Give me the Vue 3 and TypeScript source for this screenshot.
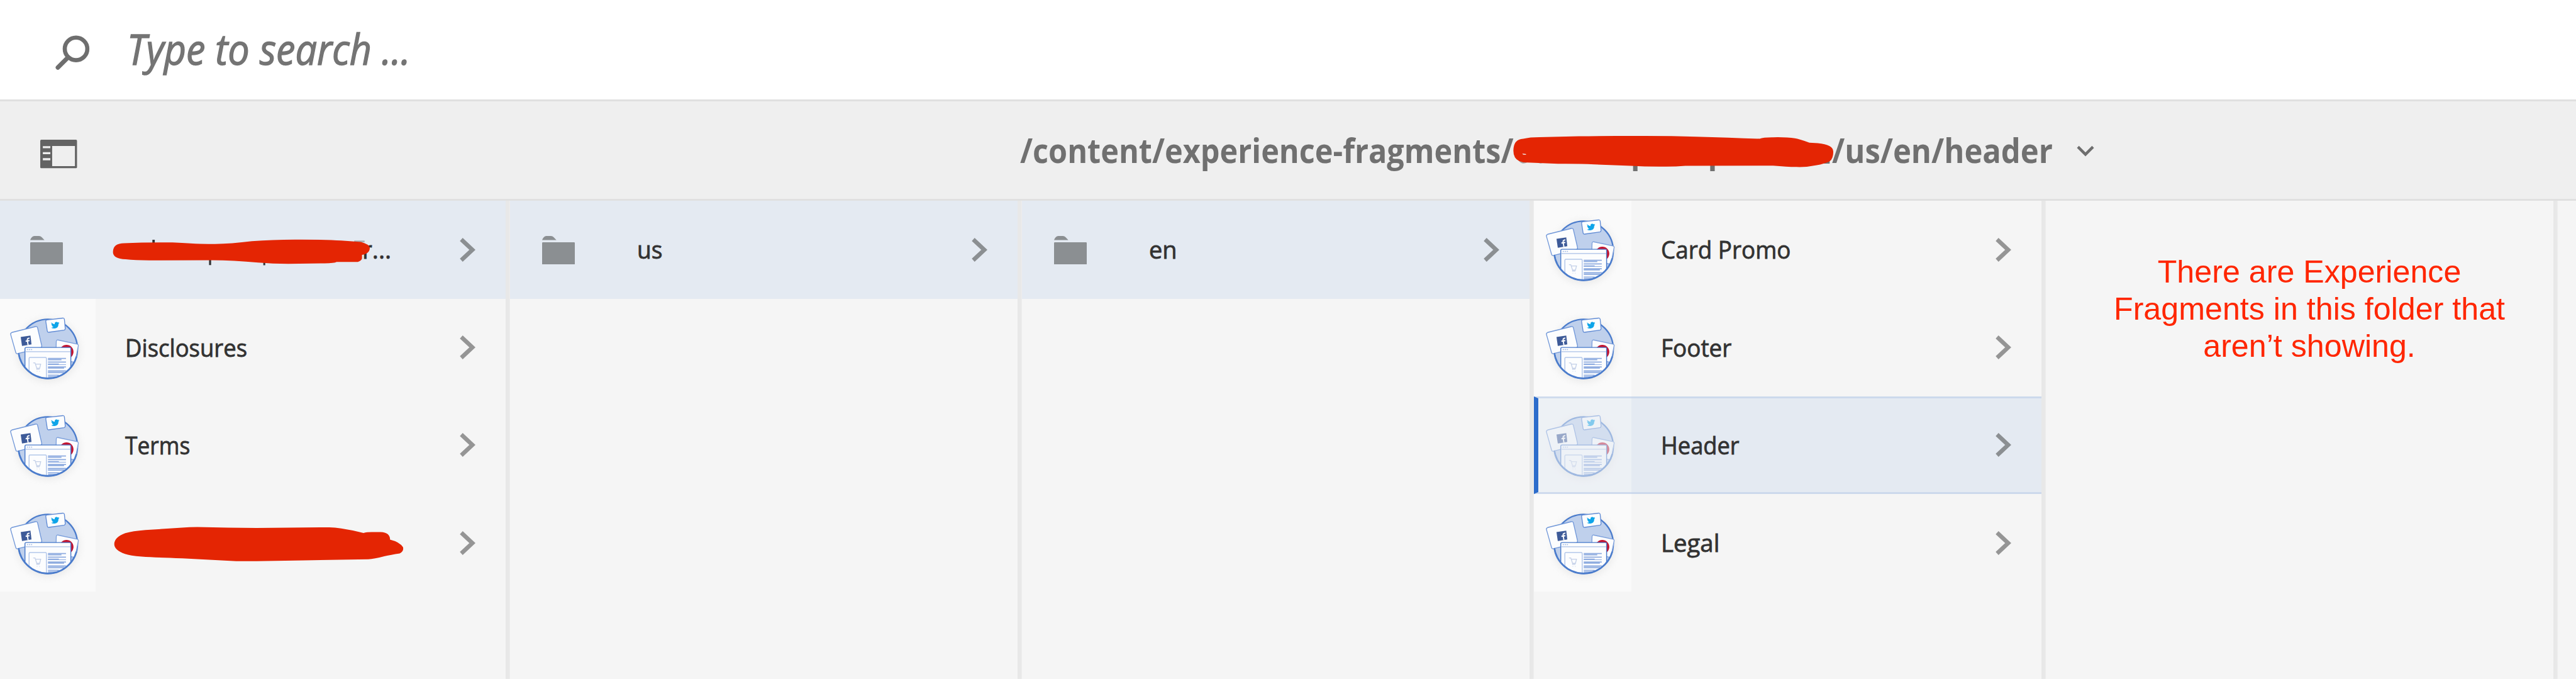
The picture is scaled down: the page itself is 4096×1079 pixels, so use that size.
<script setup lang="ts">
import type { Directive } from 'vue'

interface Item {
  label: string
  kind: 'folder' | 'fragment'
  width: number
  inset?: number
  active?: boolean
  selected?: boolean
}

const columns: Item[][] = [
  [
    { label: 'r...', kind: 'folder', width: 56, inset: 456, active: true },
    { label: 'Disclosures', kind: 'fragment', width: 235 },
    { label: 'Terms', kind: 'fragment', width: 125 },
    { label: '', kind: 'fragment', width: 0 },
  ],
  [{ label: 'us', kind: 'folder', width: 49, active: true }],
  [{ label: 'en', kind: 'folder', width: 54, active: true }],
  [
    { label: 'Card Promo', kind: 'fragment', width: 250 },
    { label: 'Footer', kind: 'fragment', width: 136 },
    { label: 'Header', kind: 'fragment', width: 151, selected: true },
    { label: 'Legal', kind: 'fragment', width: 113 },
  ],
]

// Condenses a text run horizontally to the given width, in hundredths of a rem.
const vFit: Directive<HTMLElement, number> = {
  mounted(el, { value }) {
    const unit = parseFloat(getComputedStyle(document.documentElement).fontSize) / 100
    const natural = el.getBoundingClientRect().width
    if (value && natural) el.style.transform = `scaleX(${(value * unit) / natural})`
  },
}
</script>

<template>
  <div class="page">
    <header class="search">
      <svg class="search-icon" viewBox="0 0 72 72" fill="none" stroke="#6e6e6e">
        <circle cx="43.5" cy="28.7" r="21.7" stroke-width="8" />
        <path d="M28 45 8.5 64.5" stroke-width="8.5" stroke-linecap="round" />
      </svg>
      <span v-fit="546" class="search-text">Type to search ...</span>
    </header>

    <div class="toolbar">
      <svg class="rail-icon" viewBox="0 0 71 55">
        <path
          fill="#636363"
          fill-rule="evenodd"
          d="M2 0H69Q71 0 71 2V53Q71 55 69 55H2Q0 55 0 53V2Q0 0 2 0ZM23 12V51H67V12ZM5 12.3V16.3H19.500V12.300ZM5 23.800V27.800H19.500V23.800ZM5 35.400V39.600H19.500V35.400Z"
        />
      </svg>
      <div class="path">
        <span v-fit="950" class="path-text">/content/experience-fragments/</span>
        <span class="path-gap"></span>
        <span v-fit="425" class="path-text">/us/en/header</span>
        <svg class="path-caret" viewBox="0 0 34 24" fill="none" stroke="#6e6e6e" stroke-width="5.5">
          <path d="M2.500 4 17 18.500 31.500 4" />
        </svg>
      </div>
    </div>

    <main class="columns">
      <section v-for="(items, c) in columns" :key="c" class="column">
        <div
          v-for="(item, i) in items"
          :key="i"
          class="row"
          :class="{ active: item.active, selected: item.selected }"
        >
          <div class="thumb" :class="item.kind">
            <svg v-if="item.kind === 'folder'" class="folder-icon" viewBox="0 0 63 55" fill="#8b8f92">
              <path d="M0 8Q3 0 8 0H17Q20 0 22 2L27.500 8Z" />
              <rect y="12" width="63" height="43" rx="1.500" />
            </svg>
            <svg v-else class="fragment-icon" viewBox="0 0 188 188">
              <defs>
                <radialGradient :id="`halo-${c}-${i}`">
                  <stop offset="0.7" stop-color="#e9e9e9" />
                  <stop offset="1" stop-color="#fafafa" stop-opacity="0" />
                </radialGradient>
                <clipPath :id="`disc-${c}-${i}`"><circle cx="95.800" cy="96.200" r="57" /></clipPath>
              </defs>
              <circle cx="96" cy="99" r="76" :fill="`url(#halo-${c}-${i})`" />
              <circle cx="95.800" cy="96.200" r="56.800" fill="#bfd0ec" />
              <circle cx="95.800" cy="96.200" r="57" fill="none" stroke="#4b7ccc" stroke-width="2.800" />
              <path d="M115 79 152.500 87Q154.800 87.700 154.500 90L148.500 120Q148 122 145 121.500L111 114 112 82Q112.500 78.500 115 79Z" fill="#fcfdfe" stroke="#7da0dc" stroke-width="1.600" />
              <circle cx="131.700" cy="101.900" r="13.400" fill="#c4122e" />
              <path d="M26.500 64.500 72 53.300Q75.200 52.600 76 55.500L84 90Q84.500 93 82 94L38 105.300Q34.800 106 34 103L24.200 68.500Q23.500 65.500 26.500 64.500Z" fill="#fcfdfe" stroke="#6f96d8" stroke-width="1.600" />
              <path d="M43.500 73.300 62.300 70.500 64.300 87.600 46 90.500Z" fill="#3d5a98" />
              <path d="M57.800 88.800 56.300 80Q55.500 75.500 60.500 75.300M53 81.500 60.500 80.200" fill="none" stroke="#fff" stroke-width="2.300" />
              <path d="M94 40.400 124.500 36.900Q127.200 36.700 127.600 39.300L129.300 57Q129.400 59.500 127 60L97.500 64.200Q95 64.500 94.700 62L91.800 43.300Q91.500 40.800 94 40.400Z" fill="#fcfdfe" stroke="#5f8ad4" stroke-width="1.600" />
              <path d="M102.500 45.500Q106 48.700 109 48.700 108.500 44.300 112.500 44.200 114 44.200 115 45.300L117.500 44.500 116.300 46.500 118 46.300 116.200 48.300Q116.200 55.800 109 57 105 57.300 102 55.300 104.800 55.500 106.600 54 104 53.400 103.500 51.600L105 51.600Q102.500 50.600 102.500 48.300L104 48.600Q101.500 47 102.500 45.500Z" fill="#0ea5e9" />
              <g :clip-path="`url(#disc-${c}-${i})`">
                <path d="M54 93.400H138Q140 93.400 140 96V160H51.700V96Q51.700 93.400 54 93.400Z" fill="#fcfdfe" stroke="#4b7ccc" stroke-width="1.800" />
                <path d="M52.500 101.600H139" stroke="#a9bfe6" stroke-width="1.400" />
                <path d="M55.500 97.500H66" stroke="#a9bfe6" stroke-width="2" stroke-dasharray="2.500 1.300" />
                <rect x="59.600" y="112.600" width="33.400" height="50" rx="2" fill="#fcfdfe" stroke="#b3c7ea" stroke-width="1.800" />
                <path d="M67.500 123H71L74.500 133.500H80L82 125.500H72M74.500 133.500V135.500H80M75 139V139.800M79.700 139V139.800" fill="none" stroke="#c3d0e8" stroke-width="1.600" />
                <path d="M96 114.500H130.700M96 117H122M96 121.500H130.700M96 125.500H117M96 131H130.700M96 133H127M96 138.500H130.700M96 142H128M96 147H117M96 150H114" stroke="#8eace0" stroke-width="2" />
                <path d="M96 126.500H130.700M96 140.300H128" stroke="#8eace0" stroke-width="1.200" />
              </g>
              <path d="M39.500 104A57 57 0 0 0 150.800 111" fill="none" stroke="#4b7ccc" stroke-width="2.800" />
            </svg>
          </div>
          <div class="label" :style="{ paddingLeft: (item.inset ?? 0) / 100 + 'rem' }">
            <span v-fit="item.width">{{ item.label }}</span>
          </div>
          <svg class="chevron" viewBox="0 0 30 46" fill="none" stroke-width="8">
            <path d="M3 3 24.500 23 3 43" />
          </svg>
        </div>
      </section>
      <section class="column">
        <p class="note">There are Experience<br />Fragments in this folder that<br />aren’t showing.</p>
      </section>
      <section class="rest"></section>
    </main>

    <svg class="scribbles" viewBox="0 0 4960 1306">
      <g fill="#323436">
        <path d="M293.400 461.500h4.600v8h-4.600zM402.500 498h4v12h-4zM507 503h3.700v7.300H507z" />
        <path d="M682 463h20v3h-20z" fill="#a2a7ac" />
      </g>
      <g fill="#707070">
        <path d="M3144.500 312h8.500v17.500h-8.500zM3293 312h8.700v17.500H3293zM3512 300h11v14.700h-11z" />
        <path d="M2924 309Q2932 319 2943 311ZM2958 311Q2966 318 2975 311Z" fill="#a5a5a5" />
      </g>
      <g fill="#e42503">
        <path d="M2914 290Q2914 268 2933 267Q2946 264 2964 264L3040 262.300Q3090 261.300 3140 261.700Q3210 261.300 3266 263Q3330 265 3388 267Q3396 264 3414 264.200Q3440 263.700 3456 266Q3464 267 3484 274.500L3500 275.500Q3530 278 3530 292Q3530 306 3522 311Q3512 315.500 3498 318Q3480 322 3459 321.300Q3440 321 3414 318.700L3245 319Q3225 321 3203 320.700Q3170 321 3140 319L3070 316.300Q3040 315 3000 315.300L2933 312.500Q2914 309 2914 290Z" />
        <path d="M217.500 485Q217.500 468 239 468Q280 466 332 466.500Q390 470 414 469.500Q445 469 485 464Q530 460.500 580 461Q630 461 657 463L695 465.700Q711 470 712 477Q712 488 697 490.300V497Q697 501 689 504H648Q644 506.500 625 506.700L555 507.700Q525 507.500 497 505.300Q450 501 408 500.700L287 501Q260 501 242 499Q217.500 498 217.500 485Z" />
        <path d="M220 1047Q220 1034 241 1026Q255 1022 280 1020L355 1015Q362 1014.300 380 1014.300Q440 1016 494 1016L634 1014.700Q645 1014.700 657 1017Q680 1020.500 700 1025.700Q706 1024 716 1024H733Q751 1025 751 1038.300Q770 1043 776 1053Q778 1061 769.500 1065Q752 1067.500 741 1070.300Q720 1076 709 1076.300L585 1078.300L494 1080H455L351 1074.300Q300 1073 273 1071Q250 1069.500 240.700 1066Q220 1059 220 1047Z" />
      </g>
      <path d="M2931 295.500L2938 296.500L2938.500 298L2933 297.500Z" fill="#efefef" />
    </svg>
  </div>
</template>

<style>
/* One rem is a hundred design pixels. */
html {
  font-size: 82.58px;
}
body {
  margin: 0;
  overflow: hidden;
}
</style>

<style scoped>
.page {
  position: relative;
  display: flex;
  flex-direction: column;
  width: 4096px;
  height: 1079px;
  overflow: hidden;
  background: #f5f5f5;
  font-family: 'Open Sans', 'Noto Sans', sans-serif;
}
.page svg {
  display: block;
  flex: none;
}
.search {
  flex: none;
  display: flex;
  box-sizing: border-box;
  height: 1.95rem;
  padding-left: 1.03rem;
  background: linear-gradient(#e0e0e0, #e0e0e0) bottom / 100% 3px no-repeat #fff;
}
.search-icon {
  width: 0.72rem;
  height: 0.72rem;
  margin: 0.65rem 0.7rem 0 0;
}
.search-text {
  height: 1.9rem;
  line-height: 1.88rem;
  font-size: 0.81rem;
  font-style: italic;
  white-space: nowrap;
  transform-origin: left;
  color: #747474;
  -webkit-text-stroke: 1.4px #747474;
}
.toolbar {
  flex: none;
  display: flex;
  box-sizing: border-box;
  height: 1.917rem;
  padding-left: 0.778rem;
  background: linear-gradient(#e0e0e0, #e0e0e0) bottom / 100% 3px no-repeat #efefef;
}
.rail-icon {
  width: 0.708rem;
  height: 0.55rem;
  margin: 0.743rem 18.154rem 0 0;
}
.path {
  display: grid;
  grid-template-columns: 9.48rem 6.16rem 4.71rem 0.34rem;
}
.path-text {
  justify-self: start;
  line-height: 1.88rem;
  font-size: 0.66rem;
  font-weight: 700;
  white-space: nowrap;
  transform-origin: left;
  color: #707070;
}
.path-caret {
  width: 0.34rem;
  height: 0.24rem;
  margin-top: 0.84rem;
}
.columns {
  flex: 1;
  display: flex;
  margin-left: -0.04rem;
}
.column {
  flex: none;
  box-sizing: border-box;
  width: 9.857rem;
  padding-right: 0.08rem;
  background: linear-gradient(#e8e8e8, #e8e8e8) right / 0.08rem 100% no-repeat;
}
.rest {
  flex: 1;
}
.row {
  position: relative;
  display: flex;
  align-items: center;
  height: 1.88rem;
}
.active,
.selected {
  background: #e4eaf2;
}
.selected::after {
  content: '';
  position: absolute;
  inset: 0;
  border: 3px solid rgb(190 208 232 / 0.65);
  border-left: 7px solid #2c6ccb;
  border-right: 0;
}
.thumb {
  flex: none;
  width: 1.88rem;
  height: 1.88rem;
}
.thumb.fragment {
  background: #fafafa;
}
.selected .thumb {
  opacity: 0.45;
}
.fragment-icon {
  width: 100%;
  height: 100%;
}
.folder-icon {
  width: 0.63rem;
  height: 0.55rem;
  margin: 0.67rem 0 0 0.625rem;
}
.label {
  flex: none;
  box-sizing: border-box;
  width: 7.02rem;
  margin-left: 0.575rem;
  line-height: 1.88rem;
  font-size: 0.46rem;
  white-space: nowrap;
  color: #323232;
  -webkit-text-stroke: 0.8px #323232;
}
.label span {
  display: inline-block;
  transform-origin: left;
}
.chevron {
  width: 0.3rem;
  height: 0.46rem;
  margin-left: -0.585rem;
  stroke: #959595;
}
.active .chevron,
.selected .chevron {
  stroke: #8b8f92;
}
.note {
  margin: 0;
  padding: 1.01rem 0 0 0.38rem;
  font-family: 'Liberation Sans', Arial, sans-serif;
  font-size: 0.608rem;
  line-height: 0.714rem;
  text-align: center;
  color: #ff2600;
}
.scribbles {
  position: absolute;
  top: 0;
  left: 0;
  width: 49.6rem;
  height: 13.06rem;
}
</style>
